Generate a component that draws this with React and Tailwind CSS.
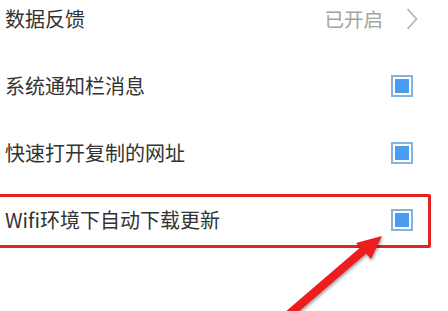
export default function App() {
  const font = { fontFamily: '"Noto Sans CJK SC", "Noto Sans", sans-serif' };
  const Check = () => (
    <div className="w-[22px] h-[22px] border-[2px] border-[#86b3da] p-[2px] bg-white">
      <div className="w-full h-full bg-[#4b9bf2]" />
    </div>
  );
  return (
    <div className="relative w-[448px] h-[311px] bg-white overflow-hidden" style={font}>
      <div className="flex flex-col -mt-[15px]">
        <div className="h-[67px] flex items-center justify-between pl-[5px] pr-[30px]">
          <span className="text-[20px] text-[#333333]">数据反馈</span>
          <div className="flex items-center">
            <span className="text-[19.5px] text-[#a3a3a3]">已开启</span>
            <svg width="12" height="22" viewBox="0 0 12 22" className="ml-[23px]">
              <path d="M1.5 1 L10.5 11 L1.5 21" fill="none" stroke="#b0b0b0" strokeWidth="1.6" />
            </svg>
          </div>
        </div>
        <div className="h-[67px] flex items-center justify-between pl-[5px] pr-[35px]">
          <span className="text-[20px] text-[#333333]">系统通知栏消息</span>
          <Check />
        </div>
        <div className="h-[67px] flex items-center justify-between pl-[5px] pr-[35px]">
          <span className="text-[20px] text-[#333333]">快速打开复制的网址</span>
          <Check />
        </div>
        <div className="h-[67px] flex items-center justify-between pl-[5px] pr-[35px]">
          <span className="text-[20px] text-[#333333]">Wifi环境下自动下载更新</span>
          <Check />
        </div>
      </div>
      <div className="absolute left-[-4px] top-[194px] w-[435px] h-[54px] border-[3px] border-[#e32222] rounded-[2px]" />
      <svg className="absolute left-0 top-0" width="448" height="311" viewBox="0 0 448 311" style={{ filter: 'drop-shadow(1px 2px 1.5px rgba(0,0,0,0.35))' }}>
        <polygon points="284,313 297,313 368,252 362,246" fill="#ee1c1c" />
        <polygon points="382,236 356,243 371,259" fill="#ee1c1c" />
      </svg>
    </div>
  );
}
